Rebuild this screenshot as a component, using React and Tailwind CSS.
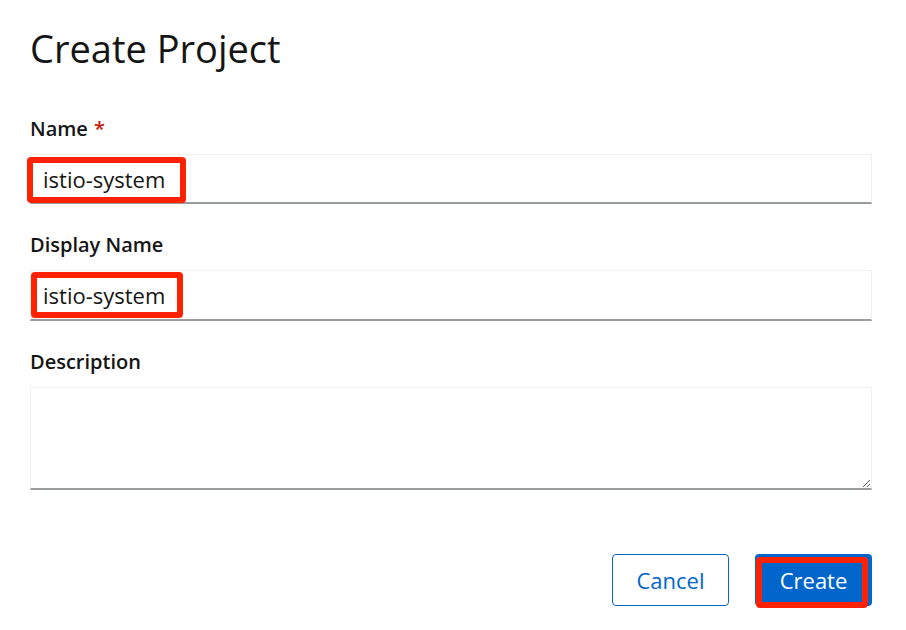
import React from "react";

const fieldClass =
  "block w-full border border-[#f0f0f0] border-b-[2px] border-b-[#9a9da0] bg-white px-[12px] text-[22px] text-[#151515] outline-none";

const Label = ({ children, required }) => (
  <label className="mb-[10px] block text-[20px] font-semibold leading-[30px] text-[#151515]">
    {children}
    {required && <span className="ml-[6px] text-[#c9190b]">*</span>}
  </label>
);

export default function App() {
  return (
    <div
      className="min-h-screen bg-white pl-[30px] pr-[34px]"
      style={{ fontFamily: '"Open Sans", "Noto Sans", sans-serif' }}
    >
      <h1 className="pt-[25px] text-[38px] font-normal leading-[46px] text-[#151515]">
        Create Project
      </h1>

      <form className="mt-[43px]" onSubmit={(e) => e.preventDefault()}>
        <Label required>Name</Label>
        <div className="relative">
          <input type="text" defaultValue="istio-system" className={`${fieldClass} h-[50px]`} />
          <div className="pointer-events-none absolute left-[-3px] top-[3px] h-[46px] w-[159px] rounded-[4px] border-[6px] border-[#ff2200]" />
        </div>

        <div className="mt-[26px]">
          <Label>Display Name</Label>
          <div className="relative">
            <input type="text" defaultValue="istio-system" className={`${fieldClass} h-[51px]`} />
            <div className="pointer-events-none absolute left-[1px] top-[2px] h-[46px] w-[152px] rounded-[4px] border-[6px] border-[#ff2200]" />
          </div>
        </div>

        <div className="mt-[26px]">
          <Label>Description</Label>
          <textarea className={`${fieldClass} h-[103px] resize-y py-[8px]`} />
        </div>

        <div className="mt-[64px] flex justify-end gap-[26px]">
          <button
            type="button"
            className="h-[52px] w-[117px] rounded-[4px] border border-[#0066cc] bg-white text-[22px] text-[#0066cc]"
          >
            Cancel
          </button>
          <div className="relative">
            <button
              type="submit"
              className="h-[52px] w-[117px] rounded-[4px] bg-[#0066cc] text-[22px] text-white"
            >
              Create
            </button>
            <div className="pointer-events-none absolute left-[1px] top-[3px] h-[51px] w-[112px] rounded-[4px] border-[6px] border-[#ff2200]" />
          </div>
        </div>
      </form>
    </div>
  );
}
